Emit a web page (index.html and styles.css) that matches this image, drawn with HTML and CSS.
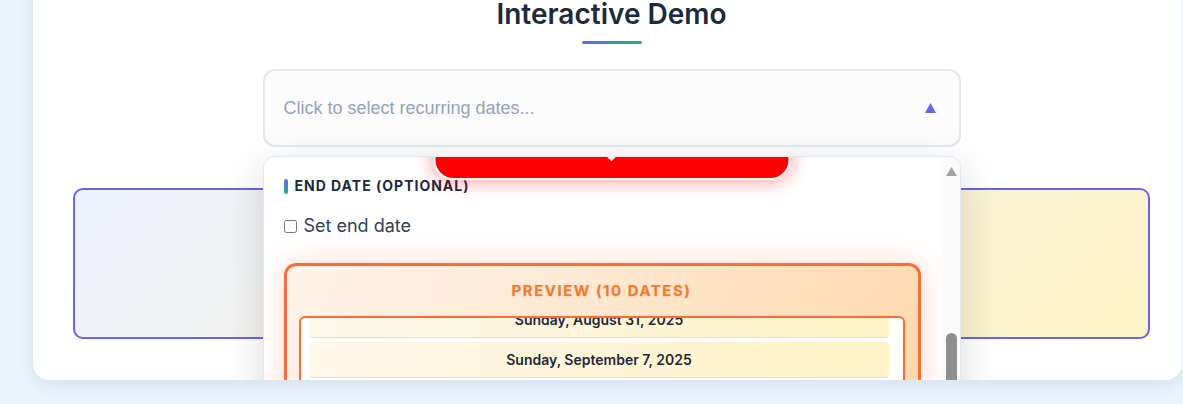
FILE: index.html
```html
<!DOCTYPE html>
<html>
<head>
<meta charset="utf-8">
<link rel="stylesheet" href="styles.css">
</head>
<body>
<main class="card">
  <h2 class="title">Interactive Demo</h2>
  <div class="title-bar"></div>
  <div class="picker">
    <div class="select">
      <span class="placeholder">Click to select recurring dates...</span>
      <svg class="arrow" width="11" height="10" viewBox="0 0 11 10"><polygon points="5.5,0 11,10 0,10" fill="#6366f1"/></svg>
    </div>
    <div class="dropdown">
      <div class="dd-content">
        <div class="section-title"><span class="accent"></span>End Date (Optional)</div>
        <label class="check"><input type="checkbox" class="check-box"><span>Set end date</span></label>
        <div class="preview">
          <div class="preview-title">Preview (10 dates)</div>
          <div class="preview-list">
            <div class="date-item first">Sunday, August 31, 2025</div>
            <div class="date-item">Sunday, September 7, 2025</div>
            <div class="date-item">Sunday, September 14, 2025</div>
          </div>
        </div>
      </div>
      <div class="toast"><span class="toast-caret"></span></div>
      <div class="scrollbar">
        <svg class="sb-up" width="11" height="9" viewBox="0 0 11 9"><polygon points="5.5,0 11,9 0,9" fill="#a3a3a3"/></svg>
        <span class="sb-thumb"></span>
      </div>
    </div>
  </div>
  <div class="demo-box"></div>
</main>
</body>
</html>
```

FILE: styles.css
```css
html, body {
  margin: 0;
  padding: 0;
}
body {
  background: #eaf4fd;
  font-family: Inter, "Noto Sans", sans-serif;
  height: 404px;
  overflow: hidden;
}
.card {
  margin: -30px 0 0 33px;
  width: 1149px;
  box-sizing: border-box;
  background: #ffffff;
  border-radius: 16px;
  box-shadow: 0 4px 16px rgba(30, 60, 90, 0.10);
  padding: 27px 32px 41px 40px;
  display: flex;
  flex-direction: column;
  align-items: center;
  overflow: hidden;
}
.title {
  margin: 0;
  font-size: 28px;
  line-height: 34px;
  font-weight: 600;
  color: #1e293b;
}
.title-bar {
  width: 60px;
  height: 3px;
  margin-top: 10px;
  border-radius: 2px;
  background: linear-gradient(90deg, #6366f1, #10b981);
}
.picker {
  position: relative;
  width: 698px;
  margin-top: 25px;
}
.select {
  height: 78px;
  box-sizing: border-box;
  border: 2px solid #e2e8f0;
  border-radius: 12px;
  background: #fcfcfd;
  display: flex;
  align-items: center;
  justify-content: space-between;
  padding: 0 23px 0 19px;
}
.placeholder {
  font-family: "Liberation Sans", Arial, sans-serif;
  font-size: 18px;
  color: #94a3b8;
}
.arrow {
  display: block;
}
.dropdown {
  position: absolute;
  top: 87px;
  left: 0;
  width: 698px;
  height: 330px;
  box-sizing: border-box;
  border: 1px solid #e2e8f0;
  border-radius: 12px;
  background: #ffffff;
  box-shadow: 0 10px 40px rgba(0, 0, 0, 0.15);
  overflow: hidden;
  z-index: 10;
}
.dd-content {
  padding: 21px 39px 0 20px;
}
.section-title {
  display: flex;
  align-items: center;
  gap: 7px;
  font-size: 14px;
  line-height: 16px;
  font-weight: 700;
  letter-spacing: 1px;
  text-transform: uppercase;
  color: #1e293b;
}
.accent {
  width: 4px;
  height: 15px;
  border-radius: 2px;
  background: linear-gradient(180deg, #6366f1, #10b981);
}
.check {
  margin-top: 22px;
  display: flex;
  align-items: center;
  gap: 7px;
  font-size: 18px;
  line-height: 20px;
  color: #334155;
}
.check-box {
  margin: 0;
  width: 13px;
  height: 13px;
}
.preview {
  margin-top: 27px;
  border: 3px solid #ff6b35;
  border-radius: 12px;
  background: linear-gradient(120deg, #fff4ea 0%, #fee3c6 60%, #fed7aa 100%);
  box-shadow: 0 0 30px rgba(255, 107, 53, 0.25);
  padding: 15px 13px 0 12px;
}
.preview-title {
  text-align: center;
  font-size: 15px;
  line-height: 20px;
  font-weight: 700;
  letter-spacing: 1.5px;
  text-transform: uppercase;
  color: #f47a30;
  text-shadow: 0 1px 2px rgba(0, 0, 0, 0.12);
  margin-bottom: 15px;
}
.preview-list {
  border: 2px solid #ff6b35;
  border-bottom: none;
  border-radius: 6px 6px 0 0;
  background: #ffffff;
  height: 120px;
  overflow: hidden;
  padding: 0 14px 0 9px;
}
.date-item {
  height: 36px;
  box-sizing: border-box;
  margin-bottom: 4px;
  background: linear-gradient(90deg, #fff7e8, #fef3c7);
  border-bottom: 1px solid #fed7aa;
  border-radius: 4px;
  display: flex;
  align-items: center;
  justify-content: center;
  font-size: 14px;
  font-weight: 600;
  color: #1e293b;
}
.date-item.first {
  margin-top: -16px;
}
.toast {
  position: absolute;
  top: -30px;
  left: 50%;
  transform: translateX(-50%);
  width: 357px;
  height: 53px;
  box-sizing: border-box;
  background: #ff0000;
  border: 2px solid #ffffff;
  border-radius: 20px;
  box-shadow: 0 0 20px rgba(255, 0, 0, 0.45);
}
.toast-caret {
  position: absolute;
  top: 25px;
  left: 50%;
  margin-left: -3px;
  width: 6px;
  height: 6px;
  background: #ffffff;
  transform: rotate(45deg);
}
.scrollbar {
  position: absolute;
  top: 0;
  right: 0;
  bottom: 0;
  width: 17px;
  background: #fafafa;
}
.sb-up {
  position: absolute;
  top: 10px;
  left: 3px;
  display: block;
}
.sb-thumb {
  position: absolute;
  top: 176px;
  left: 3px;
  width: 11px;
  height: 120px;
  border-radius: 6px;
  background: #8e8e8e;
}
.demo-box {
  margin-top: 41px;
  width: 100%;
  height: 151px;
  box-sizing: border-box;
  border: 2px solid #6366f1;
  border-radius: 10px;
  background: linear-gradient(135deg, #eef2ff, #fef3c7);
}
```
